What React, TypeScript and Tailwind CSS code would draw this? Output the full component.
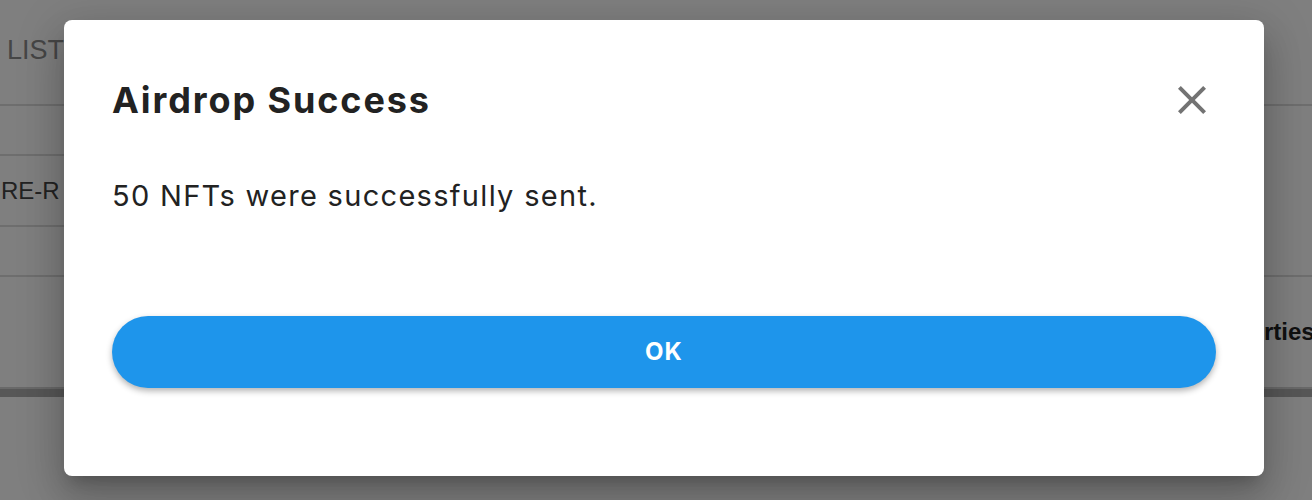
import React from "react";

const CloseIcon = () => (
  <svg viewBox="0 0 24 24" className="h-12 w-12" fill="#737373">
    <path d="M19 6.41 17.59 5 12 10.59 6.41 5 5 6.41 10.59 12 5 17.59 6.41 19 12 13.41 17.59 19 19 17.59 13.41 12z" />
  </svg>
);

const BackgroundPage = () => {
  return (
    <div className="flex h-full w-full flex-col bg-white font-['Liberation_Sans',sans-serif]">
      <div className="flex h-[106px] items-center border-b-2 border-[#dddddd] pb-1 pl-[7px] text-[27px] text-[#8c8c8c]">
        LIST
      </div>
      <div className="flex h-[171px] border-b-2 border-[#dddddd]">
        <div className="flex w-[64px] flex-col overflow-hidden whitespace-nowrap">
          <div className="h-[50px] border-b-2 border-[#dddddd]" />
          <div className="flex h-[71px] items-center border-b-2 border-[#dddddd] pl-[1px] text-[24px] text-[#444]">
            RE-R
          </div>
        </div>
      </div>
      <div className="flex h-[110px] items-center overflow-hidden whitespace-nowrap pl-[1196px]">
        <span className="text-[24px] font-bold text-[#222]">Properties</span>
      </div>
      <div className="h-[2px] bg-[#d2d2d2]" />
      <div className="h-[8px] bg-[#aeaeae]" />
      <div className="flex-1" />
    </div>
  );
};

export default function App() {
  return (
    <div className="relative h-[500px] w-[1312px] overflow-hidden">
      <BackgroundPage />
      <div className="absolute inset-0 bg-black/50" />
      <div className="absolute left-[64px] top-[20px] flex h-[456px] w-[1200px] flex-col rounded-lg bg-white px-12 font-['Inter',sans-serif] text-[#222] shadow-[0px_11px_15px_-7px_rgba(0,0,0,0.2),0px_24px_38px_3px_rgba(0,0,0,0.14),0px_9px_46px_8px_rgba(0,0,0,0.12)]">
        <div className="mt-[58px] flex h-[44px] items-center justify-between">
          <h2 className="text-[36px] font-bold leading-[44px] tracking-[1.9px]">Airdrop Success</h2>
          <button className="text-[#737373]">
            <CloseIcon />
          </button>
        </div>
        <p className="mt-[56px] text-[29px] leading-[36px] tracking-[1.3px]">50 NFTs were successfully sent.</p>
        <button className="mt-[102px] flex h-[72px] w-full items-center justify-center rounded-full bg-[#1e95eb] text-[24px] font-bold tracking-[1px] text-white shadow-[0px_3px_6px_rgba(0,0,0,0.3)]">
          OK
        </button>
      </div>
    </div>
  );
}
